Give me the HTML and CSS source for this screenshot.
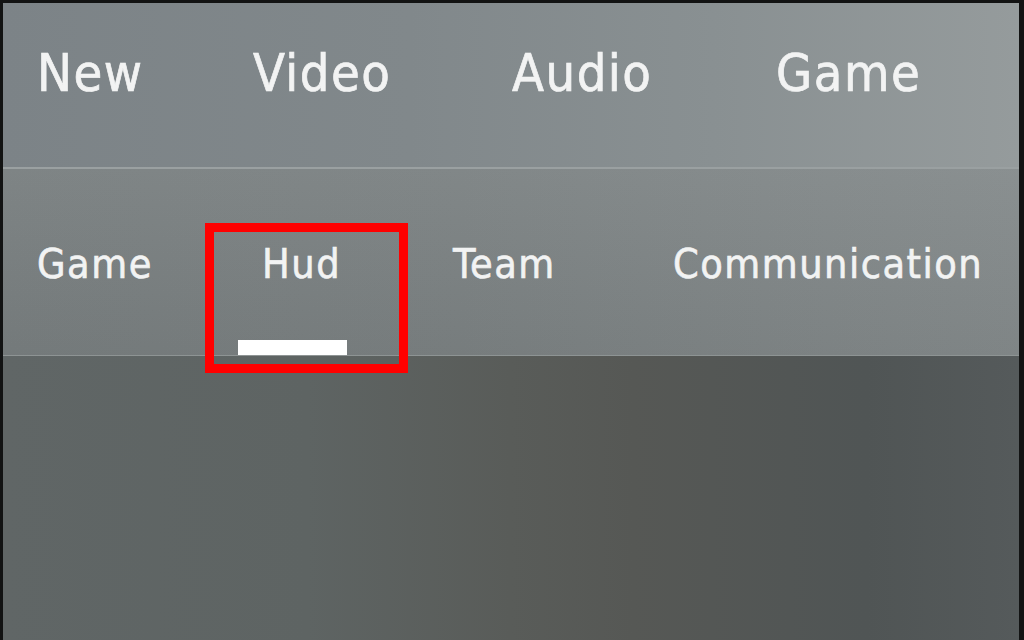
FILE: index.html
```html
<!DOCTYPE html>
<html lang="en">
<head>
  <meta charset="UTF-8">
  <link rel="stylesheet" href="styles.css">
</head>
<body>

<div class="screen">

  <!-- main settings tabs -->
  <div class="nav">
    <div class="nav-item">New</div>
    <div class="nav-item">Video</div>
    <div class="nav-item">Audio</div>
    <div class="nav-item">Game</div>
  </div>

  <!-- game sub tabs -->
  <div class="subnav">
    <div class="sub-item">Game</div>
    <div class="sub-item active marked">Hud</div>
    <div class="sub-item">Team</div>
    <div class="sub-item">Communication</div>
  </div>

  <div class="content"></div>

</div>

</body>
</html>
```

FILE: styles.css
```css
html, body { margin: 0; height: 100%; }
body {
  background: #121313;
  overflow: hidden;
  font-family: "DejaVu Sans Condensed", "DejaVu Sans", sans-serif;
  font-stretch: condensed;
  color: #f2f3f3;
}

.screen {
  margin: 3px 5px 0 3px;
  height: 637px;
  display: flex;
  flex-direction: column;
}

.nav {
  height: 166px;
  flex: none;
  box-sizing: border-box;
  padding: 44px 0 0 34px;
  display: grid;
  grid-template-columns: 216px 259px 264px auto;
  align-items: start;
  background: linear-gradient(90deg, #7c8387 0%, #81888b 40%, #899092 70%, #959b9c 100%);
  border-bottom: 2px solid #9aa0a1;
}

.nav-item {
  font-size: 52px;
  line-height: 52px;
  letter-spacing: 1.5px;
  -webkit-text-stroke: 0.7px #f2f3f3;
}

.subnav {
  height: 187px;
  flex: none;
  box-sizing: border-box;
  padding-left: 34px;
  display: grid;
  grid-template-columns: 201px 215px 220px auto;
  background:
    linear-gradient(180deg, rgba(255,255,255,0.03), rgba(0,0,0,0.05)),
    linear-gradient(90deg, #7a8081 0%, #7d8384 45%, #828889 75%, #868c8d 100%);
  border-bottom: 1px solid #8e9494;
}

.sub-item {
  position: relative;
  padding-top: 75px;
  font-size: 41px;
  line-height: 41px;
  letter-spacing: 1.5px;
  -webkit-text-stroke: 0.6px #f2f3f3;
}

.sub-item.active {
  padding-left: 24px;
  width: 109px;
  box-sizing: content-box;
}

/* selected tab underline */
.sub-item.active::after {
  content: "";
  position: absolute;
  left: 0;
  bottom: 0;
  width: 109px;
  height: 15px;
  background: #ffffff;
}

/* red annotation box */
.sub-item.marked::before {
  content: "";
  position: absolute;
  left: -33px;
  top: 54px;
  width: 203px;
  height: 150px;
  box-sizing: border-box;
  border: 9px solid #ff0000;
  z-index: 2;
}

.content {
  flex: 1;
  background: linear-gradient(90deg, #606666 0%, #5e6463 30%, #595c59 50%, #565855 62%, #505555 85%, #555a5b 100%);
}
```
